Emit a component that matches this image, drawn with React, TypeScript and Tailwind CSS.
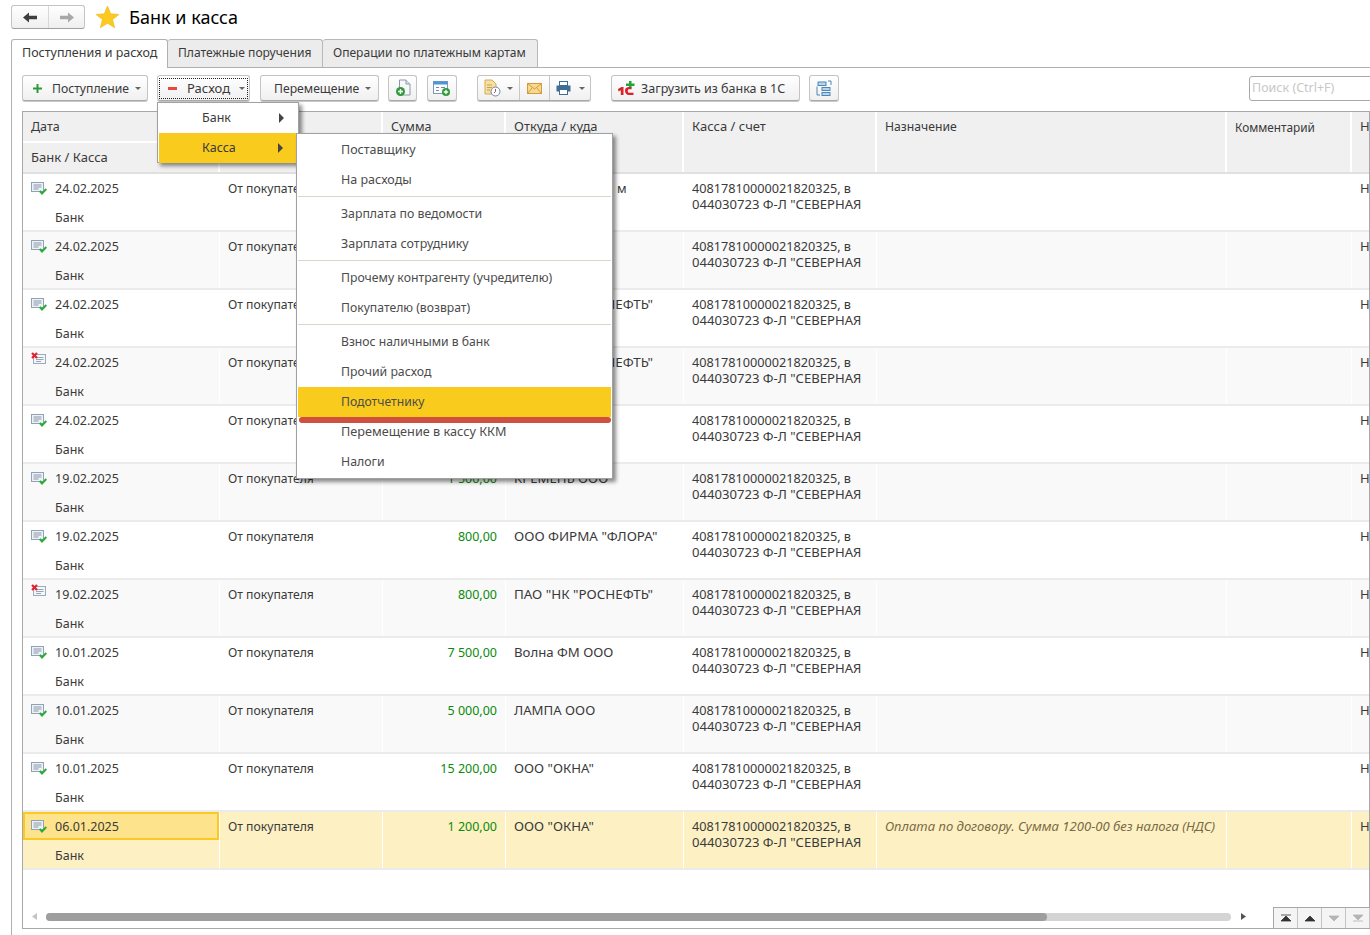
import React from "react";

const font = "[font-family:'Liberation_Sans',Arial,sans-serif]";

const Arrow = ({ dir, color }: { dir: "l" | "r"; color: string }) => (
  <svg width="14" height="11" viewBox="0 0 14 11" style={{ transform: dir === "r" ? "scaleX(-1)" : undefined }}>
    <path d="M0 5.5 L6 0.5 V3.8 H14 V7.2 H6 V10.5 Z" fill={color} />
  </svg>
);

const Caret = ({ color = "#666", cls = "" }: { color?: string; cls?: string }) => (
  <svg width="6" height="3" viewBox="0 0 6 3" className={`shrink-0 ${cls}`}>
    <path d="M0 0H6L3 3Z" fill={color} />
  </svg>
);

const Star = () => (
  <svg width="25" height="24" viewBox="0 0 25 24">
    <path d="M12.5 1 L15.7 8.8 L24 9.4 L17.6 14.6 L19.7 22.8 L12.5 18.3 L5.3 22.8 L7.4 14.6 L1 9.4 L9.3 8.8 Z" fill="#fbc920" stroke="#f0b90f" strokeWidth="0.6" />
  </svg>
);

const DocCheck = () => (
  <svg width="16" height="14" viewBox="0 0 16 14">
    <rect x="0.5" y="1.5" width="12" height="9" fill="#eef2f6" stroke="#8fa3b8" />
    <path d="M2.5 4H10.5M2.5 6H10.5M2.5 8H7.5" stroke="#8a98a8" />
    <path d="M8.8 10 L11 12.5 L15.3 8" fill="none" stroke="#2eaa3a" strokeWidth="2" />
  </svg>
);

const DocCross = () => (
  <svg width="16" height="14" viewBox="0 0 16 14">
    <rect x="2.5" y="2.5" width="12" height="9" fill="#f4f6f8" stroke="#9aabbc" />
    <path d="M5 5.5H12.5M5 7.5H12.5M5 9.5H10" stroke="#9aa6b2" />
    <path d="M1 1 L6 6 M6 1 L1 6" stroke="#e0232e" strokeWidth="2.2" />
  </svg>
);

const Btn = ({ className = "", children }: { className?: string; children?: React.ReactNode }) => (
  <div
    className={`flex h-[26px] items-center rounded-[3px] border border-[#c4c4c4] border-b-[#a9a9a9] bg-gradient-to-b from-[#ffffff] to-[#f0f0f0] shadow-[0_1px_0_#c8c8c8] ${className}`}
  >
    {children}
  </div>
);

const menu1 = [
  [["Поставщику", 0, "text-[12.5px]"], ["На расходы", 0, "text-[12.5px]"]],
  [["Зарплата по ведомости", 0, "text-[12.3px]"], ["Зарплата сотруднику", 0, "text-[12.5px]"]],
  [["Прочему контрагенту (учредителю)", 0, "text-[12.25px]"], ["Покупателю (возврат)", 0, "text-[12.2px]"]],
  [
    ["Взнос наличными в банк", 0, "text-[12.2px]"],
    ["Прочий расход", 0, "text-[12.3px]"],
    ["Подотчетнику", 1, "text-[12.2px]"],
    ["Перемещение в кассу ККМ", 0, "text-[12.7px]"],
    ["Налоги", 0, "text-[12.3px]"],
  ],
] as [string, number, string][][];

const rows: { date: string; kind: "ok" | "x"; sum: string; who: React.ReactNode; big?: boolean }[] = [
  { date: "24.02.2025", kind: "ok", sum: "1 000,00", who: <span className="pl-[103px] text-[12.5px]">м</span> },
  { date: "24.02.2025", kind: "ok", sum: "900,00", who: "" },
  { date: "24.02.2025", kind: "ok", sum: "800,00", who: 'ПАО "НК "РОСНЕФТЬ"', big: true },
  { date: "24.02.2025", kind: "x", sum: "800,00", who: 'ПАО "НК "РОСНЕФТЬ"', big: true },
  { date: "24.02.2025", kind: "ok", sum: "700,00", who: "" },
  { date: "19.02.2025", kind: "ok", sum: "1 500,00", who: "КРЕМЕНЬ ООО" },
  { date: "19.02.2025", kind: "ok", sum: "800,00", who: 'ООО ФИРМА "ФЛОРА"', big: true },
  { date: "19.02.2025", kind: "x", sum: "800,00", who: 'ПАО "НК "РОСНЕФТЬ"', big: true },
  { date: "10.01.2025", kind: "ok", sum: "7 500,00", who: "Волна ФМ ООО" },
  { date: "10.01.2025", kind: "ok", sum: "5 000,00", who: "ЛАМПА ООО" },
  { date: "10.01.2025", kind: "ok", sum: "15 200,00", who: 'ООО "ОКНА"' },
  { date: "06.01.2025", kind: "ok", sum: "1 200,00", who: 'ООО "ОКНА"' },
];

const Row = ({ r, i }: { r: (typeof rows)[number]; i: number }) => {
  const sel = i === 11;
  const bg = sel ? "bg-[#fdf1c4]" : i % 2 ? "bg-[#f9f9f9]" : "bg-white";
  const sep = "border-r border-white";
  return (
    <div className={`flex h-[58px] border-b-2 border-[#ebebeb] ${bg}`}>
      <div className={`w-[197px] shrink-0 ${sep}`}>
        <div className={`flex h-[28px] items-center pl-[8px] ${sel ? "border-2 border-[#fbc91f] bg-[#fde38c]" : ""}`}>
          <span className={`flex w-[24px] ${sel ? "-ml-[2px]" : ""}`}>{r.kind === "ok" ? <DocCheck /> : <span className="-mt-[6px]"><DocCross /></span>}</span>
          <span className="relative top-[1px] text-[12.5px]">{r.date}</span>
        </div>
        <div className="pl-[32px] pt-[8px] text-[12.5px] leading-[16px]">Банк</div>
      </div>
      <div className={`w-[163px] shrink-0 pl-[8px] pt-[7px] text-[12.2px] leading-[16px] ${sep}`}>От покупателя</div>
      <div className={`w-[123px] shrink-0 pr-[8px] pt-[7px] text-right text-[12.5px] leading-[16px] text-[#0b8a0b] ${sep}`}>{r.sum}</div>
      <div className={`w-[178px] shrink-0 overflow-hidden whitespace-nowrap pl-[8px] pt-[6px] leading-[16px] ${r.big ? "text-[13.4px]" : "text-[13.2px]"} ${sep}`}>{r.who}</div>
      <div className={`w-[193px] shrink-0 overflow-hidden whitespace-nowrap pl-[8px] pt-[6px] ${sep}`}>
        <div className="h-[16px] text-[12.7px] leading-[16px]">40817810000021820325, в</div>
        <div className="h-[16px] text-[13.1px] leading-[16px]">044030723 Ф-Л "СЕВЕРНАЯ</div>
      </div>
      <div className={`w-[350px] shrink-0 whitespace-nowrap pl-[8px] pt-[6px] text-[13.1px] italic leading-[16px] text-[#7a6a45] ${sep}`}>
        {sel ? "Оплата по договору. Сумма 1200-00 без налога (НДС)" : ""}
      </div>
      <div className={`w-[125px] shrink-0 ${sep}`} />
      <div className="flex-1 overflow-hidden pl-[8px] pt-[6px] text-[13px] leading-[16px]">Н</div>
    </div>
  );
};

const Hcell = ({ w, size, pt = "pt-[7px]", children }: { w: string; size?: string; pt?: string; children?: React.ReactNode }) => (
  <div className={`${w} ${size ?? ""} ${pt} shrink-0 border-r-2 border-white pl-[8px] leading-[16px]`}>{children}</div>
);

export default function App() {
  return (
    <div className={`${font} relative h-[935px] w-[1370px] overflow-hidden bg-white text-[12.5px] text-[#3a3a3a]`}>
      {/* header */}
      <div className="absolute left-[11px] top-[5px] flex h-[24px] w-[74px] rounded-[3px] border border-[#c4c4c4] border-b-[#a0a0a0] bg-gradient-to-b from-[#ffffff] to-[#efefef]">
        <div className="flex w-[37px] items-center justify-center border-r border-[#d8d8d8]"><Arrow dir="l" color="#3e3e3e" /></div>
        <div className="flex flex-1 items-center justify-center"><Arrow dir="r" color="#a8a8a8" /></div>
      </div>
      <div className="absolute left-[95px] top-[5px]"><Star /></div>
      <div className="absolute left-[129px] top-[5px] text-[18px] leading-[24px] text-black">Банк и касса</div>

      {/* tabs */}
      <div className="absolute left-[11px] top-[67px] h-[868px] w-[1359px] border-l border-t border-[#b0b0b0]" />
      <div className="absolute left-[11px] top-[39px] flex items-start">
        <div className="z-10 flex h-[29px] w-[157px] items-center rounded-t-[3px] border border-b-0 border-[#b0b0b0] bg-white pb-[1px] pl-[10px]">Поступления и расход</div>
        <div className="flex h-[28px] w-[155px] items-center rounded-t-[3px] border-r border-t border-[#b8b8b8] bg-[#ececec] pb-[1px] pl-[10px] text-[12.1px]">Платежные поручения</div>
        <div className="flex h-[28px] w-[215px] items-center rounded-t-[3px] border-r border-t border-[#b8b8b8] bg-[#ececec] pb-[1px] pl-[10px] text-[12.05px]">Операции по платежным картам</div>
      </div>

      {/* toolbar */}
      <div className="absolute left-[22px] top-[75px] flex items-center">
        <Btn className="w-[126px] pl-[10px]">
          <svg width="9" height="9" viewBox="0 0 9 9"><path d="M3.5 0H5.5V3.5H9V5.5H5.5V9H3.5V5.5H0V3.5H3.5Z" fill="#2f9a3a" /></svg>
          <span className="relative top-[1px] ml-[10px] text-[12.2px]">Поступление</span>
          <Caret cls="ml-auto mr-[6px]" />
        </Btn>
        <Btn className="relative ml-[9px] w-[93px] pl-[10px]">
          <span className="absolute inset-x-[1px] bottom-[1px] top-[2px] border border-dotted border-[#222]" />
          <svg width="9" height="3" viewBox="0 0 9 3"><rect width="9" height="3" fill="#e8483c" /></svg>
          <span className="relative top-[1px] ml-[10px] text-[13px]">Расход</span>
          <Caret cls="ml-auto mr-[4px]" />
        </Btn>
        <Btn className="ml-[10px] w-[119px] pl-[13px]">
          <span className="relative top-[1px] text-[12.2px]">Перемещение</span>
          <Caret cls="ml-auto mr-[7px]" />
        </Btn>
        <Btn className="ml-[9px] w-[29px] justify-center">
          <svg width="16" height="18" viewBox="0 0 16 18">
            <path d="M4.5 1H11L15 5V16H4.5Z" fill="#f8f8f8" stroke="#8a9aaa" />
            <path d="M11 1V5H15" fill="#dfe6ee" stroke="#8a9aaa" />
            <circle cx="5.5" cy="12.5" r="4.5" fill="#2f9a3a" />
            <path d="M5.5 10V15M3 12.5H8" stroke="#fff" strokeWidth="1.4" />
          </svg>
        </Btn>
        <Btn className="ml-[10px] w-[30px] justify-center">
          <svg width="18" height="17" viewBox="0 0 18 17">
            <rect x="0.5" y="1.5" width="14" height="12" fill="#fbfdff" stroke="#7e99b5" />
            <rect x="0.5" y="1.5" width="14" height="3" fill="#4f94d4" />
            <path d="M3 7.5H6M8 7.5H12M3 10.5H6" stroke="#7a8a9a" />
            <circle cx="13" cy="12" r="4" fill="#2f9a3a" />
            <path d="M13 9.8V14.2M10.8 12H15.2" stroke="#fff" strokeWidth="1.3" />
          </svg>
        </Btn>
        <Btn className="ml-[20px] w-[114px]">
          <div className="flex h-full w-[42px] items-center justify-center gap-[6px] border-r border-[#c8c8c8]">
            <svg width="17" height="18" viewBox="0 0 17 18">
              <path d="M1 1H8L12 5V15H1Z" fill="#f6dfa0" stroke="#d6ad55" />
              <path d="M3 6H8M3 8.5H8M3 11H6" stroke="#c7a15a" />
              <circle cx="11.5" cy="12.5" r="4.5" fill="#fff" stroke="#6a86b5" />
              <path d="M11.5 10V12.5L10 14" fill="none" stroke="#c8443a" />
            </svg>
            <Caret />
          </div>
          <div className="flex h-full w-[30px] items-center justify-center border-r border-[#c8c8c8]">
            <svg width="15" height="11" viewBox="0 0 15 11">
              <rect x="0.5" y="0.5" width="14" height="10" fill="#f7d98f" stroke="#d59a3e" />
              <path d="M0.5 0.5L7.5 6L14.5 0.5M0.5 10.5L5.5 4.5M14.5 10.5L9.5 4.5" fill="none" stroke="#d59a3e" />
            </svg>
          </div>
          <div className="flex h-full flex-1 items-center justify-center gap-[8px]">
            <svg width="15" height="14" viewBox="0 0 15 14">
              <rect x="3.5" y="0.5" width="8" height="4" fill="#fff" stroke="#3e6d96" />
              <rect x="0.5" y="4.5" width="14" height="6" fill="#3e6d96" />
              <rect x="3.5" y="8.5" width="8" height="5" fill="#fff" stroke="#3e6d96" />
            </svg>
            <Caret />
          </div>
        </Btn>
        <Btn className="ml-[20px] w-[189px] pl-[5px]">
          <svg width="18" height="18" viewBox="0 0 18 18">
            <path d="M9 4.5H12V2H14.5V4.5H17.5V7H14.5V9.5H12V7H9Z" fill="#1ea83a" />
            <path d="M1 10L4.5 8H6.5V16H3.8V11.2L1.5 12.5ZM8 11.5C8 9.5 9.5 8 12 8H14.5V10.2H12.3C11.2 10.2 10.8 10.8 10.8 12C10.8 13.2 11.2 13.8 12.3 13.8H16.5V16H12C9.5 16 8 14 8 11.5Z" fill="#d8232a" />
          </svg>
          <span className="relative top-[1px] ml-[6px]">Загрузить из банка в 1С</span>
        </Btn>
        <Btn className="ml-[9px] w-[30px] justify-center">
          <svg width="16" height="17" viewBox="0 0 16 17">
            <rect x="2" y="2" width="8" height="3.5" fill="#b9d3ea" stroke="#4d86b8" />
            <rect x="6" y="7.5" width="8" height="3" fill="#b9d3ea" stroke="#4d86b8" />
            <rect x="6" y="12.5" width="8" height="3" fill="#b9d3ea" stroke="#4d86b8" />
            <path d="M12 1H15V5M1 6.5V15H4" fill="none" stroke="#4d86b8" />
          </svg>
        </Btn>
      </div>
      <div className="absolute left-[1249px] top-[76px] flex h-[25px] w-[130px] items-center rounded-[3px] border border-[#a8a8a8] pl-[2px] text-[#c8c8c8]">Поиск (Ctrl+F)</div>

      {/* table */}
      <div className="absolute left-[22px] top-[111px] h-[818px] w-[1348px] border border-[#a8a8a8]">
        <div className="flex h-[62px] border-b-2 border-[#e0e0e0] bg-[#f0f0f0]">
          <div className="w-[197px] shrink-0 border-r-2 border-white">
            <div className="h-[31px] border-b-2 border-white pl-[8px] pt-[7px] leading-[16px]">Дата</div>
            <div className="pl-[8px] pt-[6px] text-[13px] leading-[16px]">Банк / Касса</div>
          </div>
          <Hcell w="w-[163px]" />
          <Hcell w="w-[123px]">Сумма</Hcell>
          <Hcell w="w-[178px]" size="text-[13px]" pt="pt-[6px]">Откуда / куда</Hcell>
          <Hcell w="w-[193px]" size="text-[13px]" pt="pt-[6px]">Касса / счет</Hcell>
          <Hcell w="w-[350px]" size="text-[12.2px]">Назначение</Hcell>
          <Hcell w="w-[125px]" size="text-[11.8px]">Комментарий</Hcell>
          <div className="flex-1 overflow-hidden pl-[8px] pt-[6px] text-[13px] leading-[16px]">Н</div>
        </div>
        {rows.map((r, i) => (
          <Row key={i} r={r} i={i} />
        ))}
        {/* scrollbar */}
        <svg width="5" height="7" viewBox="0 0 5 7" className="absolute left-[9px] top-[801px]"><path d="M5 0V7L0 3.5Z" fill="#c4c4c4" /></svg>
        <div className="absolute left-[23px] top-[801px] h-[8px] w-[1185px] rounded-full bg-[#d4d4d4]">
          <div className="h-full w-[1001px] rounded-full bg-[#9e9e9e]" />
        </div>
        <svg width="5" height="7" viewBox="0 0 5 7" className="absolute left-[1218px] top-[801px]"><path d="M0 0V7L5 3.5Z" fill="#555" /></svg>
        <div className="absolute bottom-0 left-[1250px] flex h-[21px] border-l border-t border-[#a8a8a8] bg-[#f4f4f4]">
          {[
            ["M1 2H11M6 3L1 8H11Z", "#333"],
            ["M6 3L1 8H11Z", "#333"],
            ["M1 3H11L6 8Z", "#b4b4b4"],
            ["M1 2H11L6 7ZM1 8H11", "#b4b4b4"],
          ].map(([d, c], i) => (
            <div key={i} className="flex w-[24px] items-center justify-center border-r border-[#c4c4c4]">
              <svg width="12" height="10" viewBox="0 0 12 10"><path d={d} fill={c} stroke={c} strokeWidth="0.8" /></svg>
            </div>
          ))}
        </div>
      </div>

      {/* first-level menu */}
      <div className="absolute left-[157px] top-[102px] z-20 h-[61px] w-[142px] border border-[#a0a0a0] bg-white shadow-[3px_3px_4px_rgba(0,0,0,0.45)]">
        <div className="flex h-[30px] items-center pl-[44px]">Банк
          <svg width="5" height="10" viewBox="0 0 5 10" className="ml-auto mr-[14px]"><path d="M0 0L5 5L0 10Z" fill="#444" /></svg>
        </div>
        <div className="ml-[1px] flex h-[30px] items-center bg-[#f9cb1d] pl-[43px]">Касса
          <svg width="5" height="10" viewBox="0 0 5 10" className="ml-auto mr-[15px]"><path d="M0 0L5 5L0 10Z" fill="#444" /></svg>
        </div>
      </div>

      {/* second-level menu */}
      <div className="absolute left-[296px] top-[133px] z-30 flex w-[317px] flex-col border border-[#a0a0a0] bg-white pb-[1px] pt-[1px] shadow-[3px_3px_4px_rgba(0,0,0,0.45)]">
        {menu1.map((group, gi) => (
          <React.Fragment key={gi}>
            {gi > 0 && <div className="mx-[1px] mb-[2px] mt-[1px] h-px bg-[#dcd6c4]" />}
            {group.map(([t, hi, size]) => (
              <div key={t} className={`mx-[1px] flex h-[30px] items-center pl-[43px] text-[#4c4c4c] ${size} ${hi ? "bg-[#f9cb1d]" : ""}`}>{t}</div>
            ))}
          </React.Fragment>
        ))}
        <div className="absolute left-[2px] top-[283px] h-[6px] w-[312px] rounded-full bg-[#d0503f]" />
      </div>
    </div>
  );
}
